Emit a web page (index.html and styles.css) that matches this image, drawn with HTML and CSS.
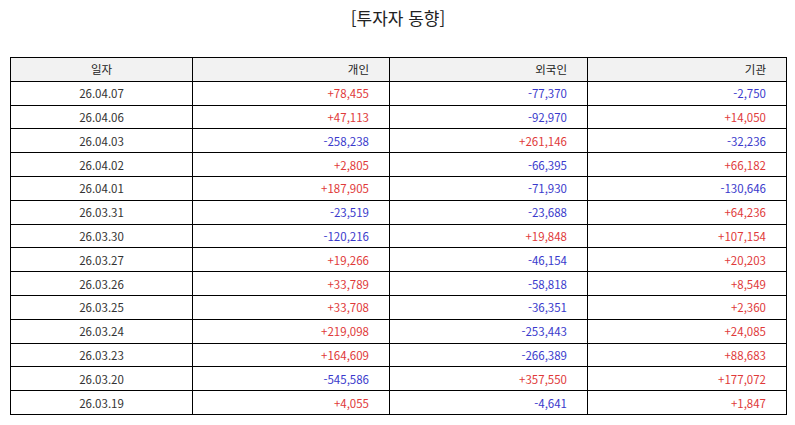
FILE: index.html
```html
<!DOCTYPE html>
<html lang="ko">
<head>
<meta charset="utf-8">
<link rel="stylesheet" href="styles.css">
</head>
<body>
<div class="page">
<h1 class="title">[투자자 동향]</h1>
<table class="grid">
<colgroup><col class="c1"><col class="c2"><col class="c3"><col class="c4"></colgroup>
<thead>
<tr><th class="center">일자</th><th>개인</th><th>외국인</th><th>기관</th></tr>
</thead>
<tbody>
<tr><td class="center">26.04.07</td><td class="up">+78,455</td><td class="dn">-77,370</td><td class="dn">-2,750</td></tr>
<tr><td class="center">26.04.06</td><td class="up">+47,113</td><td class="dn">-92,970</td><td class="up">+14,050</td></tr>
<tr><td class="center">26.04.03</td><td class="dn">-258,238</td><td class="up">+261,146</td><td class="dn">-32,236</td></tr>
<tr><td class="center">26.04.02</td><td class="up">+2,805</td><td class="dn">-66,395</td><td class="up">+66,182</td></tr>
<tr><td class="center">26.04.01</td><td class="up">+187,905</td><td class="dn">-71,930</td><td class="dn">-130,646</td></tr>
<tr><td class="center">26.03.31</td><td class="dn">-23,519</td><td class="dn">-23,688</td><td class="up">+64,236</td></tr>
<tr><td class="center">26.03.30</td><td class="dn">-120,216</td><td class="up">+19,848</td><td class="up">+107,154</td></tr>
<tr><td class="center">26.03.27</td><td class="up">+19,266</td><td class="dn">-46,154</td><td class="up">+20,203</td></tr>
<tr><td class="center">26.03.26</td><td class="up">+33,789</td><td class="dn">-58,818</td><td class="up">+8,549</td></tr>
<tr><td class="center">26.03.25</td><td class="up">+33,708</td><td class="dn">-36,351</td><td class="up">+2,360</td></tr>
<tr><td class="center">26.03.24</td><td class="up">+219,098</td><td class="dn">-253,443</td><td class="up">+24,085</td></tr>
<tr><td class="center">26.03.23</td><td class="up">+164,609</td><td class="dn">-266,389</td><td class="up">+88,683</td></tr>
<tr><td class="center">26.03.20</td><td class="dn">-545,586</td><td class="up">+357,550</td><td class="up">+177,072</td></tr>
<tr><td class="center">26.03.19</td><td class="up">+4,055</td><td class="dn">-4,641</td><td class="up">+1,847</td></tr>
</tbody>
</table>
</div>
</body>
</html>
```
FILE: styles.css
```css
html, body {
  margin: 0;
  padding: 0;
  background: #fff;
}
.page {
  padding: 0 9px 0 10px;
  font-family: "Noto Sans CJK KR", "Noto Sans", sans-serif;
  color: #333;
}
.title {
  margin: 0;
  padding-top: 6px;
  height: 57px;
  box-sizing: border-box;
  text-align: center;
  font-size: 17px;
  font-weight: normal;
  line-height: 24px;
  color: #222;
}
.grid {
  width: 776px;
  border-collapse: collapse;
  table-layout: fixed;
  font-size: 11.5px;
}
.c1 { width: 182px; }
.c2 { width: 197px; }
.c3 { width: 198px; }
.c4 { width: 199px; }
.grid th, .grid td {
  border: 1px solid #000;
  height: 22.8px;
  padding: 0 20px 0 4px;
  text-align: right;
  font-weight: normal;
  line-height: 14px;
}
.grid th {
  background: #f2f2f2;
  color: #222;
}
.grid .center {
  text-align: center;
  padding: 0;
}
.up { color: #e03a3a; }
.dn { color: #3a3acc; }
```
